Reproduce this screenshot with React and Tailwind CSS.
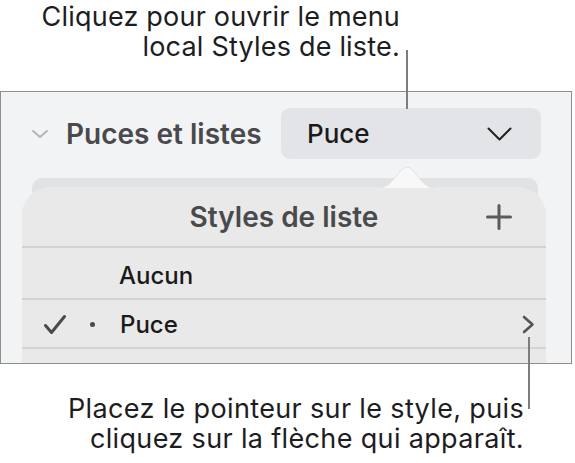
export default function App() {
  return (
    <div className="relative w-[575px] h-[463px] bg-white overflow-hidden font-['Inter',sans-serif] text-[#1d1d1f]">
      {/* top callout */}
      <div className="w-[400px] pt-[2px] text-right text-[27px] leading-[30px] tracking-[0.2px]">
        Cliquez pour ouvrir le menu
        <br />
        local Styles de liste.
      </div>

      {/* panel */}
      <div className="mt-[29px] w-[572px] h-[273px] border-[1.5px] border-[#8e8e8e] bg-[#f2f3f5] overflow-hidden">
        <div className="flex items-center mt-[16px] h-[51px]">
          <svg className="ml-[30px]" width="18" height="10" viewBox="0 0 18 10" fill="none">
            <path d="M2 2 L9 8 L16 2" stroke="#b4b4b6" strokeWidth="2" strokeLinecap="round" strokeLinejoin="round" />
          </svg>
          <span className="ml-[17px] text-[28px] font-semibold text-[#4a4a4c]">Puces et listes</span>
          <div className="ml-auto mr-[30px] w-[260px] h-[51px] rounded-[9px] bg-[#e3e4e7] flex items-center pl-[26px] pr-[29px]">
            <span className="text-[26px] font-medium text-[#1a1a1a]">Puce</span>
            <svg className="ml-auto" width="25" height="14" viewBox="0 0 25 14" fill="none">
              <path d="M1.5 1.5 L12.5 12.5 L23.5 1.5" stroke="#222" strokeWidth="2" strokeLinecap="round" strokeLinejoin="round" />
            </svg>
          </div>
        </div>

        {/* back card */}
        <div className="mt-[19px] ml-[31px] w-[506px] rounded-t-[10px] bg-[#e1e2e4] pt-[9px]">
          {/* front popover */}
          <div className="relative -ml-[10px] w-[524px] h-[200px] rounded-t-[28px] bg-[#e9e9e9]">
            <svg className="absolute left-[357px] -top-[21px]" width="56" height="22" viewBox="0 0 56 22">
              <path d="M0 22 C 14 22, 20 1, 28 1 C 36 1, 42 22, 56 22" fill="#f8f8f9" stroke="#dcdde0" strokeWidth="0.8" />
            </svg>
            <div className="grid grid-cols-[1fr_auto_1fr] items-center h-[59px]">
              <div />
              <span className="text-[28px] font-semibold text-[#4a4a4c]">Styles de liste</span>
              <div className="flex justify-end pr-[34px]">
                <svg width="26" height="26" viewBox="0 0 26 26" fill="none">
                  <path d="M13 1.5 V24.5 M1.5 13 H24.5" stroke="#5b5b5d" strokeWidth="3" strokeLinecap="round" />
                </svg>
              </div>
            </div>
            <div className="h-[2px] bg-[#d3d3d4]" />
            <div className="h-[50px] flex items-center pt-[5px] pl-[97px]">
              <span className="text-[24px] font-medium text-[#1a1a1a]">Aucun</span>
            </div>
            <div className="h-[2px] bg-[#d3d3d4]" />
            <div className="h-[47px] flex items-center pt-[2px] pl-[21px] pr-[11px]">
              <svg width="24" height="21" viewBox="0 0 24 21" fill="none">
                <path d="M2.5 11.5 L8.5 18.5 L21.5 2.5" stroke="#4a4a4c" strokeWidth="3" strokeLinecap="round" strokeLinejoin="round" />
              </svg>
              <span className="ml-[23px] w-[5px] h-[5px] rounded-full bg-[#4a4a4c]" />
              <span className="ml-[25px] text-[24px] font-medium text-[#1a1a1a]">Puce</span>
              <svg className="ml-auto" width="13" height="19" viewBox="0 0 13 19" fill="none">
                <path d="M2 2 L10.5 9.5 L2 17" stroke="#555557" strokeWidth="2.6" strokeLinecap="round" strokeLinejoin="round" />
              </svg>
            </div>
            <div className="h-[2px] bg-[#d3d3d4]" />
          </div>
        </div>
      </div>

      {/* bottom callout */}
      <div className="mt-[30px] w-[524px] text-right text-[27px] leading-[30px] tracking-[0.35px]">
        Placez le pointeur sur le style, puis
        <br />
        cliquez sur la flèche qui apparaît.
      </div>

      {/* leader lines */}
      <div className="absolute left-[406px] top-[50px] w-[2px] h-[59px] bg-[#7d7d7d]" />
      <div className="absolute left-[528px] top-[337px] w-[2px] h-[72px] bg-[#7d7d7d]" />
    </div>
  );
}
